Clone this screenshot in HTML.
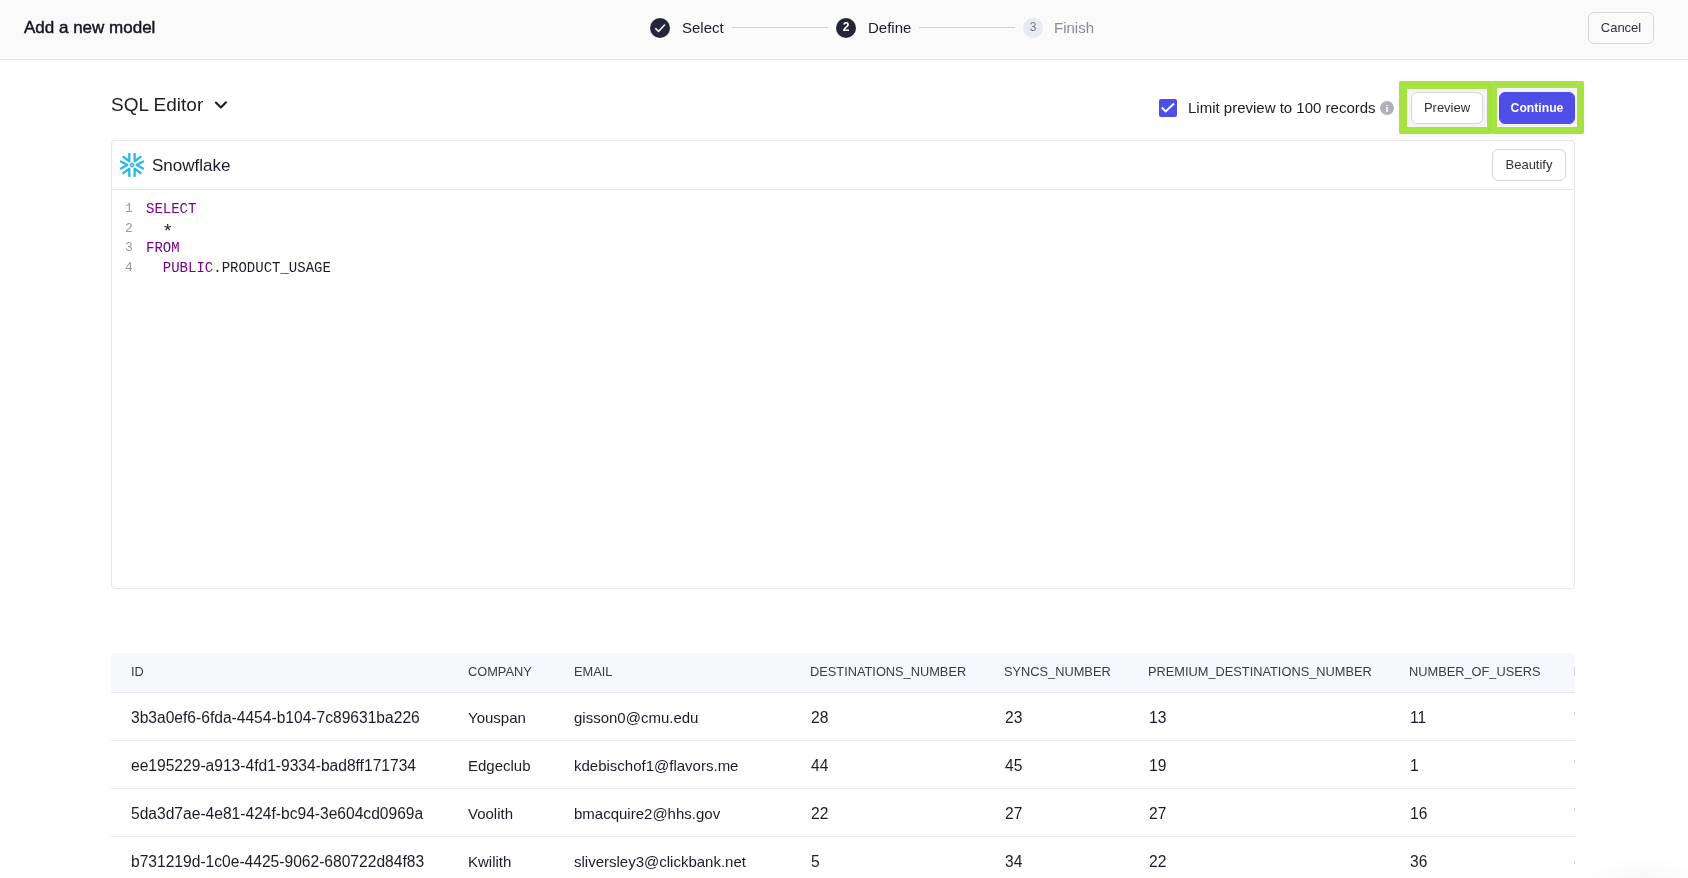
<!DOCTYPE html>
<html>
<head>
<meta charset="utf-8">
<style>
*{box-sizing:border-box;margin:0;padding:0}
html,body{width:1688px;height:878px;overflow:hidden;background:#fff;will-change:transform;font-family:"Liberation Sans",sans-serif;color:#1c1c28}
.abs{position:absolute}
#hdr{position:absolute;left:0;top:0;width:1688px;height:60px;background:#fafafa;border-bottom:1px solid #e6e8f0}
.title{left:24px;top:18px;font-size:17px;font-weight:normal;-webkit-text-stroke:0.45px #15151f;color:#15151f;white-space:nowrap}
.circ{width:20px;height:20px;border-radius:50%;background:#25253a;color:#fff;font-size:12px;font-weight:bold;text-align:center;line-height:18px}
.stxt{font-size:15px;white-space:nowrap;top:19px}
.sline{height:1px;background:#cfd2da;top:27px}
.btn{border:1px solid #d4d6dd;border-radius:6px;background:#fff;font-size:13px;text-align:center;color:#30303c}
.code{font-family:"Liberation Mono",monospace;font-size:14px;white-space:pre}
.kw{color:#770088}
.ln{color:#999;font-family:"Liberation Mono",monospace;font-size:13px}
.th{font-size:12.8px;color:#3a3a48;white-space:nowrap;top:664px}
.td{font-size:15.6px;white-space:nowrap;color:#1c1c28}
.rowline{left:111px;width:1464px;height:1px;background:#e3e6ee}
</style>
</head>
<body>
<div id="hdr">
  <div class="abs title">Add a new model</div>
  <div class="abs circ" style="left:650px;top:18px"><svg width="20" height="20" style="position:absolute;left:0;top:0"><path d="M5.7 10.7 L8.6 13.4 L14.5 7" fill="none" stroke="#ececf2" stroke-width="1.6" stroke-linecap="round" stroke-linejoin="round"/></svg></div>
  <div class="abs stxt" style="left:682px">Select</div>
  <div class="abs sline" style="left:732px;width:96px"></div>
  <div class="abs circ" style="left:836px;top:18px">2</div>
  <div class="abs stxt" style="left:868px">Define</div>
  <div class="abs sline" style="left:919px;width:96px"></div>
  <div class="abs circ" style="left:1023px;top:18px;background:#e7e9f3;color:#7a7a86;font-weight:normal">3</div>
  <div class="abs stxt" style="left:1054px;color:#8a8a94">Finish</div>
  <div class="abs btn" style="left:1588px;top:12px;width:66px;height:32px;line-height:29px;background:transparent">Cancel</div>
</div>

<div class="abs" style="left:111px;top:94px;font-size:19px;white-space:nowrap">SQL Editor</div>
<svg class="abs" style="left:205px;top:91px" width="30" height="30"><path d="M10.9 11.6 L15.9 16.6 L21 11.3" fill="none" stroke="#1c1a30" stroke-width="2.1" stroke-linecap="round" stroke-linejoin="round"/></svg>

<!-- checkbox -->
<div class="abs" style="left:1159px;top:99px;width:18px;height:18px;border-radius:2px;background:#4f4ee8"><svg width="18" height="18" style="position:absolute;left:0;top:0"><path d="M2.8 8.5 L6.7 12.4 L15 4.5" fill="none" stroke="#fff" stroke-width="2" stroke-linecap="butt" stroke-linejoin="miter"/></svg></div>
<div class="abs" style="left:1188px;top:99px;font-size:15px;white-space:nowrap">Limit preview to 100 records</div>
<div class="abs" style="left:1380px;top:101px;width:14px;height:14px;border-radius:50%;background:#b1b1b8"><div class="abs" style="left:6px;top:3.5px;width:2px;height:1.5px;background:#f0f0f6"></div><div class="abs" style="left:6px;top:6px;width:2px;height:5px;background:#f0f0f6"></div></div>

<!-- highlight boxes -->
<div class="abs" style="left:1399px;top:81px;width:93px;height:53px;background:#a8e242;border-radius:2px;box-shadow:0 1px 5px rgba(40,40,80,0.07)"></div>
<div class="abs" style="left:1491px;top:81px;width:93px;height:53px;background:#a8e242;border-radius:2px;box-shadow:0 1px 5px rgba(40,40,80,0.07)"></div>
<div class="abs" style="left:1407px;top:89px;width:80px;height:38px;background:#f4f4f6"></div>
<div class="abs" style="left:1497px;top:88px;width:80px;height:39px;background:#f4f4f6"></div>
<div class="abs btn" style="left:1411px;top:92px;width:72px;height:32px;line-height:30px">Preview</div>
<div class="abs btn" style="left:1499px;top:92px;width:76px;height:32px;line-height:30px;background:#4f4de8;border-color:#4f4de8;color:#fff;font-weight:bold;font-size:12.2px">Continue</div>

<!-- editor -->
<div class="abs" style="left:111px;top:140px;width:1464px;height:449px;border:1px solid #e4e6ee;border-radius:4px"></div>
<div class="abs" style="left:112px;top:189px;width:1462px;height:1px;background:#e4e6ee"></div>
<svg class="abs" style="left:120px;top:153px" width="24" height="24" viewBox="0 0 24 24"><g fill="none" stroke="#2cb6ea" stroke-width="2.3" stroke-linecap="round" stroke-linejoin="round">
<path d="M3.4 3.9 L9.3 8.2 L9.3 0.9"/><path d="M20.6 3.9 L14.6 8.2 L14.6 0.9"/>
<path d="M1 8.5 L7.3 12 L1 15.5"/><path d="M23 8.5 L16.7 12 L23 15.5"/>
<path d="M3.4 20 L9.3 15.8 L9.3 23.1"/><path d="M20.6 20 L14.6 15.8 L14.6 23.1"/>
<path d="M12 10.1 L13.9 12 L12 13.9 L10.1 12 Z" stroke-width="1.4"/></g></svg>
<div class="abs" style="left:152px;top:156px;font-size:17px;white-space:nowrap">Snowflake</div>
<div class="abs btn" style="left:1492px;top:149px;width:74px;height:32px;line-height:30px">Beautify</div>

<div class="abs ln" style="left:125px;top:201px">1</div>
<div class="abs ln" style="left:125px;top:221px">2</div>
<div class="abs ln" style="left:125px;top:240px">3</div>
<div class="abs ln" style="left:125px;top:260px">4</div>
<div class="abs code" style="left:146px;top:201px"><span class="kw">SELECT</span></div>
<div class="abs code" style="left:162px;top:220.5px;font-size:19px">*</div>
<div class="abs code" style="left:146px;top:240px"><span class="kw">FROM</span></div>
<div class="abs code" style="left:146px;top:260px">  <span class="kw">PUBLIC</span>.PRODUCT_USAGE</div>

<!-- table -->
<div class="abs" style="left:111px;top:653px;width:1464px;height:40px;background:#f7f8fb;border-radius:4px 4px 0 0"></div>
<div class="rowline abs" style="top:692px"></div>
<div class="rowline abs" style="top:740px"></div>
<div class="rowline abs" style="top:788px"></div>
<div class="rowline abs" style="top:836px"></div>
<div class="abs th" style="left:131px">ID</div>
<div class="abs th" style="left:468px">COMPANY</div>
<div class="abs th" style="left:574px">EMAIL</div>
<div class="abs th" style="left:810px">DESTINATIONS_NUMBER</div>
<div class="abs th" style="left:1004px">SYNCS_NUMBER</div>
<div class="abs th" style="left:1148px">PREMIUM_DESTINATIONS_NUMBER</div>
<div class="abs th" style="left:1409px">NUMBER_OF_USERS</div>
<div class="abs td" style="left:131px;top:709px">3b3a0ef6-6fda-4454-b104-7c89631ba226</div>
<div class="abs td" style="left:468px;top:709px;font-size:15px">Youspan</div>
<div class="abs td" style="left:574px;top:709px;font-size:15px">gisson0@cmu.edu</div>
<div class="abs td" style="left:811px;top:709px">28</div>
<div class="abs td" style="left:1005px;top:709px">23</div>
<div class="abs td" style="left:1149px;top:709px">13</div>
<div class="abs td" style="left:1410px;top:709px">11</div>
<div class="abs td" style="left:131px;top:757px">ee195229-a913-4fd1-9334-bad8ff171734</div>
<div class="abs td" style="left:468px;top:757px;font-size:15px">Edgeclub</div>
<div class="abs td" style="left:574px;top:757px;font-size:15px">kdebischof1@flavors.me</div>
<div class="abs td" style="left:811px;top:757px">44</div>
<div class="abs td" style="left:1005px;top:757px">45</div>
<div class="abs td" style="left:1149px;top:757px">19</div>
<div class="abs td" style="left:1410px;top:757px">1</div>
<div class="abs td" style="left:131px;top:805px">5da3d7ae-4e81-424f-bc94-3e604cd0969a</div>
<div class="abs td" style="left:468px;top:805px;font-size:15px">Voolith</div>
<div class="abs td" style="left:574px;top:805px;font-size:15px">bmacquire2@hhs.gov</div>
<div class="abs td" style="left:811px;top:805px">22</div>
<div class="abs td" style="left:1005px;top:805px">27</div>
<div class="abs td" style="left:1149px;top:805px">27</div>
<div class="abs td" style="left:1410px;top:805px">16</div>
<div class="abs td" style="left:131px;top:853px">b731219d-1c0e-4425-9062-680722d84f83</div>
<div class="abs td" style="left:468px;top:853px;font-size:15px">Kwilith</div>
<div class="abs td" style="left:574px;top:853px;font-size:15px">sliversley3@clickbank.net</div>
<div class="abs td" style="left:811px;top:853px">5</div>
<div class="abs td" style="left:1005px;top:853px">34</div>
<div class="abs td" style="left:1149px;top:853px">22</div>
<div class="abs td" style="left:1410px;top:853px">36</div>
<div class="abs" style="left:1574px;top:667px;width:1px;height:9px;background:#d6d6dc"></div>
<div class="abs" style="left:1574px;top:712px;width:1px;height:3px;background:#d8d8de"></div>
<div class="abs" style="left:1574px;top:760px;width:1px;height:3px;background:#d8d8de"></div>
<div class="abs" style="left:1574px;top:808px;width:1px;height:3px;background:#d8d8de"></div>
<div class="abs" style="left:1574px;top:861px;width:1px;height:3px;background:#d8d8de"></div>
<div class="abs" style="left:1573px;top:855px;width:140px;height:90px;border-radius:50%;background:radial-gradient(ellipse at center, rgba(20,20,70,0.04) 0%, rgba(20,20,70,0.025) 40%, rgba(20,20,70,0) 70%)"></div>
</body>
</html>
